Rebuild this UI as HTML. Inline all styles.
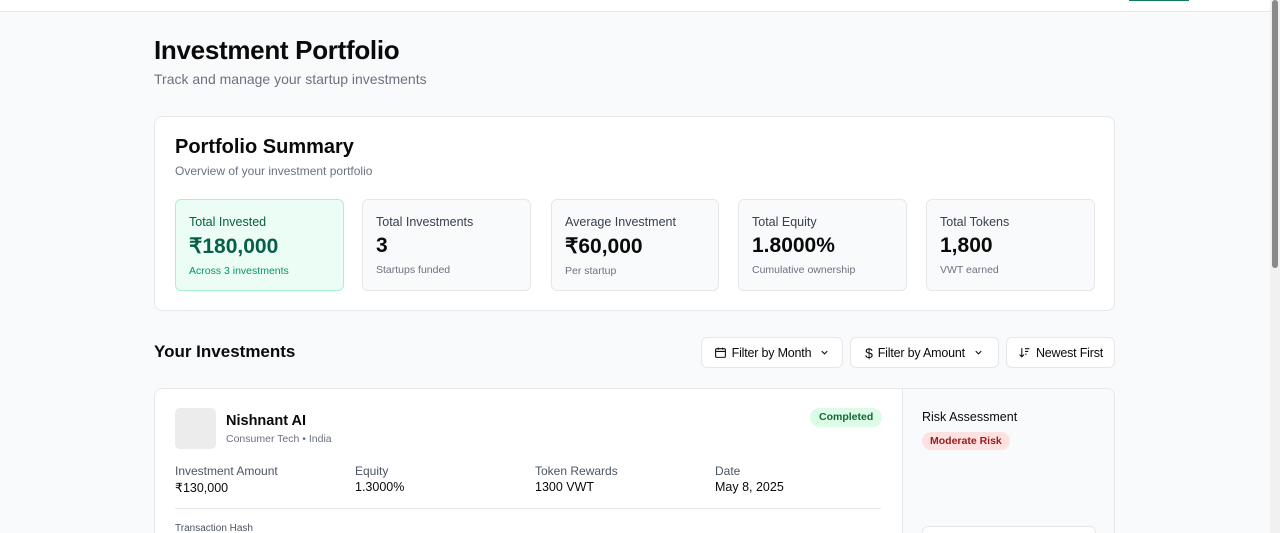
<!DOCTYPE html>
<html><head><meta charset="utf-8"><style>
*{box-sizing:border-box;margin:0;padding:0}
html,body{width:1280px;height:533px;overflow:hidden}
body{background:#f9fafb;font-family:"Liberation Sans",sans-serif;color:#0a0a0a;position:relative}
.top{position:absolute;left:0;top:0;width:1270px;height:12px;background:#fff;border-bottom:1px solid #e5e7eb}
.top .g{position:absolute;left:1129px;top:0;width:60px;height:1px;background:#0f7a55}
.sb{position:absolute;right:0;top:0;width:10px;height:533px;background:#f1f1f1}
.sb div{position:absolute;left:2px;top:0;width:6px;height:268px;background:#8a8a8a;border-radius:3px}
.abs{position:absolute;white-space:nowrap}
h1{position:absolute;left:154px;top:35px;font-size:26px;font-weight:700;letter-spacing:-0.3px}
.sub{position:absolute;left:154px;top:71px;font-size:14px;color:#6b7280}
.card{position:absolute;left:154px;top:116px;width:961px;height:195px;background:#fff;border:1px solid #e5e7eb;border-radius:8px}
.card h2{position:absolute;left:20px;top:19px;font-size:20px;font-weight:600}
.card .s{position:absolute;left:20px;top:47px;font-size:12px;color:#6b7280}
.st{position:absolute;top:82px;width:169px;height:92px;border:1px solid #e5e7eb;border-radius:6px;background:#f9fafb;padding:15px 13px}
.st .l{font-size:12.5px;color:#374151}
.st .v{font-size:21px;font-weight:700;margin-top:5px}
.st .d{font-size:10.5px;color:#6b7280;margin-top:6px}
.st.gr{background:#ecfdf5;border-color:#a7f3d0}
.st.gr .l{color:#065f46}.st.gr .v{color:#065f46}.st.gr .d{color:#059669}
.yi{position:absolute;left:154px;top:342px;font-size:17px;font-weight:600}
.btn{position:absolute;top:337px;height:31px;background:#fff;border:1px solid #e5e7eb;border-radius:6px;font-size:12.5px;display:flex;align-items:center;justify-content:center;gap:5px;white-space:nowrap;letter-spacing:-0.2px}
.inv{position:absolute;left:154px;top:388px;width:961px;height:145px;background:#fff;border:1px solid #e5e7eb;border-bottom:none;border-radius:8px 8px 0 0;overflow:hidden}
.rp{position:absolute;left:747px;top:0;width:214px;height:145px;background:#f9fafb;border-left:1px solid #e5e7eb}
</style></head><body>
<div class="top"><div class="g"></div></div>
<div class="sb"><div></div></div>
<h1>Investment Portfolio</h1>
<div class="sub">Track and manage your startup investments</div>
<div class="card">
<h2>Portfolio Summary</h2>
<div class="s">Overview of your investment portfolio</div>
<div class="st gr" style="left:20px"><div class="l">Total Invested</div><div class="v">₹180,000</div><div class="d">Across 3 investments</div></div>
<div class="st" style="left:207px"><div class="l">Total Investments</div><div class="v">3</div><div class="d">Startups funded</div></div>
<div class="st" style="left:396px;width:168px"><div class="l">Average Investment</div><div class="v">₹60,000</div><div class="d">Per startup</div></div>
<div class="st" style="left:583px"><div class="l">Total Equity</div><div class="v">1.8000%</div><div class="d">Cumulative ownership</div></div>
<div class="st" style="left:771px"><div class="l">Total Tokens</div><div class="v">1,800</div><div class="d">VWT earned</div></div>
</div>
<div class="yi">Your Investments</div>
<div class="btn" style="left:701px;width:142px"><svg width="13" height="13" viewBox="0 0 24 24" fill="none" stroke="#111" stroke-width="2"><rect x="3" y="5" width="18" height="16" rx="2"/><path d="M3 10h18M8 3v4M16 3v4"/></svg>Filter by Month<svg width="11" height="11" viewBox="0 0 24 24" fill="none" stroke="#111" stroke-width="2.5" style="margin-left:3px"><path d="M6 9l6 6 6-6"/></svg></div>
<div class="btn" style="left:850px;width:149px"><span style="font-size:14px">$</span>Filter by Amount<svg width="11" height="11" viewBox="0 0 24 24" fill="none" stroke="#111" stroke-width="2.5" style="margin-left:3px"><path d="M6 9l6 6 6-6"/></svg></div>
<div class="btn" style="left:1006px;width:109px"><svg width="13" height="13" viewBox="0 0 24 24" fill="none" stroke="#111" stroke-width="2"><path d="M7 4v16M3 16l4 4 4-4M13 5h8M13 10h6M13 15h3"/></svg>Newest First</div>
<div class="inv">
<div class="abs" style="left:20px;top:19px;width:41px;height:41px;background:#ececec;border-radius:5px"></div>
<div class="abs" style="left:71px;top:24px;font-size:14.5px;font-weight:600">Nishnant AI</div>
<div class="abs" style="left:71px;top:44px;font-size:10.5px;color:#6b7280">Consumer Tech • India</div>
<div class="abs" style="left:655px;top:19px;height:19px;padding:0 9px;line-height:19px;background:#dcfce7;color:#166534;border-radius:10px;font-size:10.5px;font-weight:600">Completed</div>
<div class="abs" style="left:20px;top:75px;font-size:12px;color:#4b5563">Investment Amount</div>
<div class="abs" style="left:20px;top:91px;font-size:12.5px">₹130,000</div>
<div class="abs" style="left:200px;top:75px;font-size:12px;color:#4b5563">Equity</div>
<div class="abs" style="left:200px;top:91px;font-size:12.5px">1.3000%</div>
<div class="abs" style="left:380px;top:75px;font-size:12px;color:#4b5563">Token Rewards</div>
<div class="abs" style="left:380px;top:91px;font-size:12.5px">1300 VWT</div>
<div class="abs" style="left:560px;top:75px;font-size:12px;color:#4b5563">Date</div>
<div class="abs" style="left:560px;top:91px;font-size:12.5px">May 8, 2025</div>
<div class="abs" style="left:20px;top:119px;width:706px;height:1px;background:#e5e7eb"></div>
<div class="abs" style="left:20px;top:134px;font-size:10px;color:#4b5563">Transaction Hash</div>
<div class="rp">
<div class="abs" style="left:19px;top:21px;font-size:12.5px;font-weight:500">Risk Assessment</div>
<div class="abs" style="left:19px;top:43px;height:18px;padding:0 8px;line-height:18px;background:#fee2e2;color:#991b1b;border-radius:9px;font-size:10.5px;font-weight:600">Moderate Risk</div>
<div class="abs" style="left:19px;top:137px;width:174px;height:8px;background:#fff;border:1px solid #e5e7eb;border-bottom:none;border-radius:6px 6px 0 0"></div>
</div>
</div>
</body></html>
